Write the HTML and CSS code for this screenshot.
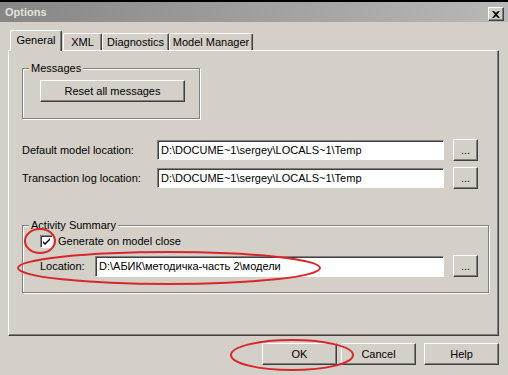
FILE: index.html
```html
<!DOCTYPE html>
<html lang="en">
<head>
  <meta charset="UTF-8">
  <title>Options</title>
  <link rel="stylesheet" href="styles.css">
</head>
<body>
  <div class="window">
    <div class="titlebar">
      <span class="title">Options</span>
      <span class="close">
        <svg width="8" height="7" viewBox="0 0 8 7"><path d="M0 0h2l2 2 2-2h2L5 3.5 8 7H6L4 5 2 7H0l3-3.5z" fill="#000"/></svg>
      </span>
    </div>

    <div class="dialog">
      <div class="tabs">
        <div class="tab active">General</div>
        <div class="tab tab-xml">XML</div>
        <div class="tab tab-diag">Diagnostics</div>
        <div class="tab tab-model">Model Manager</div>
      </div>

      <div class="panel">
        <fieldset class="group messages">
          <legend>Messages</legend>
          <button class="btn reset">Reset all messages</button>
        </fieldset>

        <div class="row row-first">
          <label class="label">Default model location:</label>
          <div class="field">D:\DOCUME~1\sergey\LOCALS~1\Temp</div>
          <button class="btn browse">...</button>
        </div>
        <div class="row row-second">
          <label class="label">Transaction log location:</label>
          <div class="field">D:\DOCUME~1\sergey\LOCALS~1\Temp</div>
          <button class="btn browse">...</button>
        </div>

        <fieldset class="group activity">
          <legend>Activity Summary</legend>
          <div class="check-row">
            <span class="checkbox">
              <svg width="9" height="9" viewBox="0 0 9 9"><path d="M1 4l2 2 5-5v2L3 8 1 6z" fill="#000"/></svg>
            </span>
            <span>Generate on model close</span>
          </div>
          <div class="row row-location">
            <label class="label short">Location:</label>
            <div class="field wide">D:\АБИК\методичка-часть 2\модели</div>
            <button class="btn browse">...</button>
          </div>
        </fieldset>
      </div>

      <div class="buttons">
        <button class="btn action ok">OK</button>
        <button class="btn action cancel">Cancel</button>
        <button class="btn action help">Help</button>
      </div>
    </div>

    <svg class="marks" width="508" height="375" viewBox="0 0 508 375">
      <ellipse cx="40" cy="241" rx="15" ry="12" fill="none" stroke="#d8262a" stroke-width="2"/>
      <ellipse cx="169" cy="268" rx="151" ry="16" fill="none" stroke="#d8262a" stroke-width="2"/>
      <ellipse cx="292" cy="355" rx="61" ry="15" fill="none" stroke="#d8262a" stroke-width="2"/>
    </svg>
  </div>
</body>
</html>
```

FILE: styles.css
```css
body {
  margin: 0;
  background: #d4d0c8;
  font-family: "Liberation Sans", Arial, sans-serif;
  font-size: 11px;
  color: #000;
}
.window {
  position: relative;
  width: 508px;
  height: 375px;
  box-sizing: border-box;
  border-top: 2px solid #000;
  background: #d4d0c8;
  overflow: hidden;
}
.titlebar {
  height: 20px;
  display: flex;
  justify-content: space-between;
  align-items: flex-start;
  padding: 0 4px 0 5px;
  background: linear-gradient(to right, #868686, #b8b8b8);
}
.title {
  font-weight: bold;
  color: #e6e2da;
  line-height: 20px;
}
.close {
  margin-top: 5px;
  width: 16px;
  height: 14px;
  box-sizing: border-box;
  display: flex;
  align-items: center;
  justify-content: center;
  background: #d4d0c8;
  border: 1px solid;
  border-color: #fff #404040 #404040 #fff;
  box-shadow: inset -1px -1px 0 #808080;
}
.dialog {
  padding: 8px 9px 0 8px;
}
.tabs {
  display: flex;
  align-items: flex-end;
  height: 20px;
  position: relative;
  z-index: 1;
}
.tab {
  height: 17px;
  box-sizing: border-box;
  line-height: 16px;
  text-align: center;
  background: #d4d0c8;
  border-left: 1px solid #fff;
  border-top: 1px solid #fff;
  border-right: 1px solid #404040;
  border-radius: 2px 2px 0 0;
  box-shadow: inset -1px 0 0 #808080;
}
.tab.active {
  height: 21px;
  margin-bottom: -1px;
  margin-left: 2px;
  width: 52px;
  line-height: 18px;
}
.tab-xml {
  width: 39px;
  margin-left: 1px;
}
.tab-diag {
  width: 67px;
}
.tab-model {
  width: 84px;
}
.panel {
  height: 286px;
  box-sizing: border-box;
  padding: 0 9px 0 13px;
  border-top: 1px solid #fff;
  border-left: 1px solid #fff;
  border-right: 1px solid #404040;
  border-bottom: 1px solid #404040;
  box-shadow: inset -1px -1px 0 #808080;
  overflow: hidden;
}
.group {
  margin: 0;
  box-sizing: border-box;
  border: 1px solid #808080;
  box-shadow: 1px 1px 0 #fff, inset 1px 1px 0 #fff;
}
.group legend {
  padding: 0 2px;
  margin-left: -11px;
  line-height: 13px;
  background: #d4d0c8;
  position: relative;
}
.messages {
  width: 178px;
  margin-top: 11px;
  padding: 5px 0 16px 17px;
}
.btn {
  font-family: inherit;
  font-size: 11px;
  color: #000;
  background: #d4d0c8;
  box-sizing: border-box;
  height: 22px;
  padding: 0;
  border: 1px solid;
  border-color: #fff #404040 #404040 #fff;
  box-shadow: inset -1px -1px 0 #808080;
}
.reset {
  width: 145px;
  display: block;
}
.row {
  display: flex;
  align-items: center;
  height: 22px;
}
.row-first {
  margin-top: 20px;
}
.row-second {
  margin-top: 6px;
}
.label {
  width: 135px;
  flex: none;
}
.label.short {
  width: 55px;
}
.field {
  width: 287px;
  height: 20px;
  box-sizing: border-box;
  padding: 0 3px;
  line-height: 18px;
  background: #fff;
  border: 1px solid;
  border-color: #808080 #fff #fff #808080;
  box-shadow: inset 1px 1px 0 #404040;
  white-space: nowrap;
  overflow: hidden;
}
.field.wide {
  width: 349px;
  height: 21px;
  line-height: 19px;
}
.browse {
  width: 25px;
  margin-left: 9px;
  line-height: 14px;
}
.activity {
  width: 467px;
  margin-top: 30px;
  padding: 2px 0 15px 17px;
}
.check-row {
  display: flex;
  align-items: center;
  gap: 5px;
  height: 14px;
}
.checkbox {
  width: 13px;
  height: 13px;
  box-sizing: border-box;
  display: flex;
  align-items: center;
  justify-content: center;
  background: #fff;
  border: 1px solid;
  border-color: #808080 #fff #fff #808080;
  box-shadow: inset 1px 1px 0 #404040;
}
.row-location {
  margin-top: 7px;
}
.buttons {
  display: flex;
  justify-content: flex-end;
  margin-top: 7px;
}
.action {
  width: 75px;
}
.cancel {
  margin-left: 4px;
}
.help {
  margin-left: 8px;
}
.marks {
  position: absolute;
  top: -2px;
  left: 0;
  pointer-events: none;
}
```
